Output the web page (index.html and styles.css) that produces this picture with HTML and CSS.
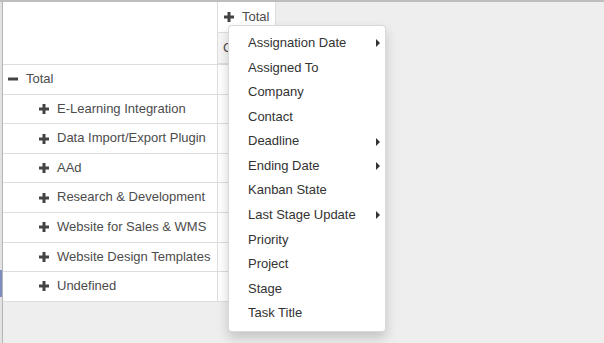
FILE: index.html
```html
<!DOCTYPE html>
<html lang="en">

<head>
  <meta charset="UTF-8" />
  <title>Pivot</title>
  <link rel="stylesheet" href="styles.css">
</head>

<body>
  <div class="frame">
    <div class="edge">
      <div class="edge_mark"></div>
    </div>

    <div class="view">
      <table class="pivot">
        <thead>
          <tr>
            <th class="corner" rowspan="2"></th>
            <th class="col_header">
              <span class="label">
                <svg class="icon" viewBox="0 0 10 10"><path d="M3.5 0h3v3.5H10v3H6.5V10h-3V6.5H0v-3h3.5z" /></svg>
                Total
              </span>
            </th>
          </tr>
          <tr>
            <th class="measure">Count</th>
          </tr>
        </thead>
        <tbody>
          <tr>
            <td class="row_header">
              <span class="label">
                <svg class="icon" viewBox="0 0 10 10"><path d="M0 3.5h10v3H0z" /></svg>
                Total
              </span>
            </td>
            <td class="value"></td>
          </tr>
          <tr>
            <td class="row_header indent">
              <span class="label">
                <svg class="icon" viewBox="0 0 10 10"><path d="M3.5 0h3v3.5H10v3H6.5V10h-3V6.5H0v-3h3.5z" /></svg>
                E-Learning Integration
              </span>
            </td>
            <td class="value"></td>
          </tr>
          <tr>
            <td class="row_header indent">
              <span class="label">
                <svg class="icon" viewBox="0 0 10 10"><path d="M3.5 0h3v3.5H10v3H6.5V10h-3V6.5H0v-3h3.5z" /></svg>
                Data Import/Export Plugin
              </span>
            </td>
            <td class="value"></td>
          </tr>
          <tr>
            <td class="row_header indent">
              <span class="label">
                <svg class="icon" viewBox="0 0 10 10"><path d="M3.5 0h3v3.5H10v3H6.5V10h-3V6.5H0v-3h3.5z" /></svg>
                AAd
              </span>
            </td>
            <td class="value"></td>
          </tr>
          <tr>
            <td class="row_header indent">
              <span class="label">
                <svg class="icon" viewBox="0 0 10 10"><path d="M3.5 0h3v3.5H10v3H6.5V10h-3V6.5H0v-3h3.5z" /></svg>
                Research &amp; Development
              </span>
            </td>
            <td class="value"></td>
          </tr>
          <tr>
            <td class="row_header indent">
              <span class="label">
                <svg class="icon" viewBox="0 0 10 10"><path d="M3.5 0h3v3.5H10v3H6.5V10h-3V6.5H0v-3h3.5z" /></svg>
                Website for Sales &amp; WMS
              </span>
            </td>
            <td class="value"></td>
          </tr>
          <tr>
            <td class="row_header indent">
              <span class="label">
                <svg class="icon" viewBox="0 0 10 10"><path d="M3.5 0h3v3.5H10v3H6.5V10h-3V6.5H0v-3h3.5z" /></svg>
                Website Design Templates
              </span>
            </td>
            <td class="value"></td>
          </tr>
          <tr>
            <td class="row_header indent">
              <span class="label">
                <svg class="icon" viewBox="0 0 10 10"><path d="M3.5 0h3v3.5H10v3H6.5V10h-3V6.5H0v-3h3.5z" /></svg>
                Undefined
              </span>
            </td>
            <td class="value"></td>
          </tr>
        </tbody>
      </table>

      <!-- group by menu opened from the column header -->
      <ul class="dropdown">
        <li class="dropdown_item">Assignation Date <span class="caret"></span></li>
        <li class="dropdown_item">Assigned To</li>
        <li class="dropdown_item">Company</li>
        <li class="dropdown_item">Contact</li>
        <li class="dropdown_item">Deadline <span class="caret"></span></li>
        <li class="dropdown_item">Ending Date <span class="caret"></span></li>
        <li class="dropdown_item">Kanban State</li>
        <li class="dropdown_item">Last Stage Update <span class="caret"></span></li>
        <li class="dropdown_item">Priority</li>
        <li class="dropdown_item">Project</li>
        <li class="dropdown_item">Stage</li>
        <li class="dropdown_item">Task Title</li>
      </ul>
    </div>
  </div>
</body>

</html>
```

FILE: styles.css
```css
body {
  font-family: "Liberation Sans", Arial, sans-serif;
  font-size: 13px;
  line-height: 1.42857;
  color: #4c4c4c;
  margin: 0;
  background-color: #efeeee;
}

.frame {
  display: flex;
  height: 341px;
  border-top: 2px solid #bdbdbd;
}

.edge {
  width: 2px;
  background-color: #e2e2e2;
}

.edge_mark {
  margin-top: 268px;
  height: 27px;
  background-color: #7d8dbf;
}

.view {
  flex: 1;
  position: relative;
  border-left: 1px solid #b5b5b5;
}

.pivot {
  border-collapse: collapse;
  background-color: #fff;
}

.pivot th,
.pivot td {
  padding: 5px;
  border: 1px solid #ddd;
  font-weight: normal;
  text-align: left;
  white-space: nowrap;
}

.pivot thead th {
  padding-top: 6px;
}

.pivot thead tr:first-child th {
  border-top: none;
}

.pivot thead tr:last-child th {
  padding-bottom: 6px;
  border-bottom: 2px solid #ddd;
}

.corner {
  width: 204px;
}

.corner,
.row_header {
  border-left: none !important;
}

.col_header {
  width: 46px;
  padding-left: 6px !important;
}

.measure {
  background-color: #f6f6f6;
}

.value {
  height: 18.57px;
  text-align: right !important;
}

.label {
  display: flex;
  align-items: center;
  gap: 8px;
}

.icon {
  width: 10px;
  height: 10px;
  fill: #444;
}

.indent {
  padding-left: 36px !important;
}

.dropdown {
  position: absolute;
  left: 225px;
  top: 23px;
  width: 158px;
  box-sizing: border-box;
  margin: 0;
  padding: 5px 0;
  list-style: none;
  background-color: #fff;
  border: 1px solid rgba(0, 0, 0, 0.15);
  border-radius: 4px;
  box-shadow: 0 6px 12px rgba(0, 0, 0, 0.175);
}

.dropdown_item {
  display: flex;
  justify-content: space-between;
  align-items: center;
  padding: 3px 5px 3px 19px;
  color: #333;
}

.caret {
  width: 0;
  height: 0;
  border-left: 4px solid #333;
  border-top: 4px solid transparent;
  border-bottom: 4px solid transparent;
}
```
